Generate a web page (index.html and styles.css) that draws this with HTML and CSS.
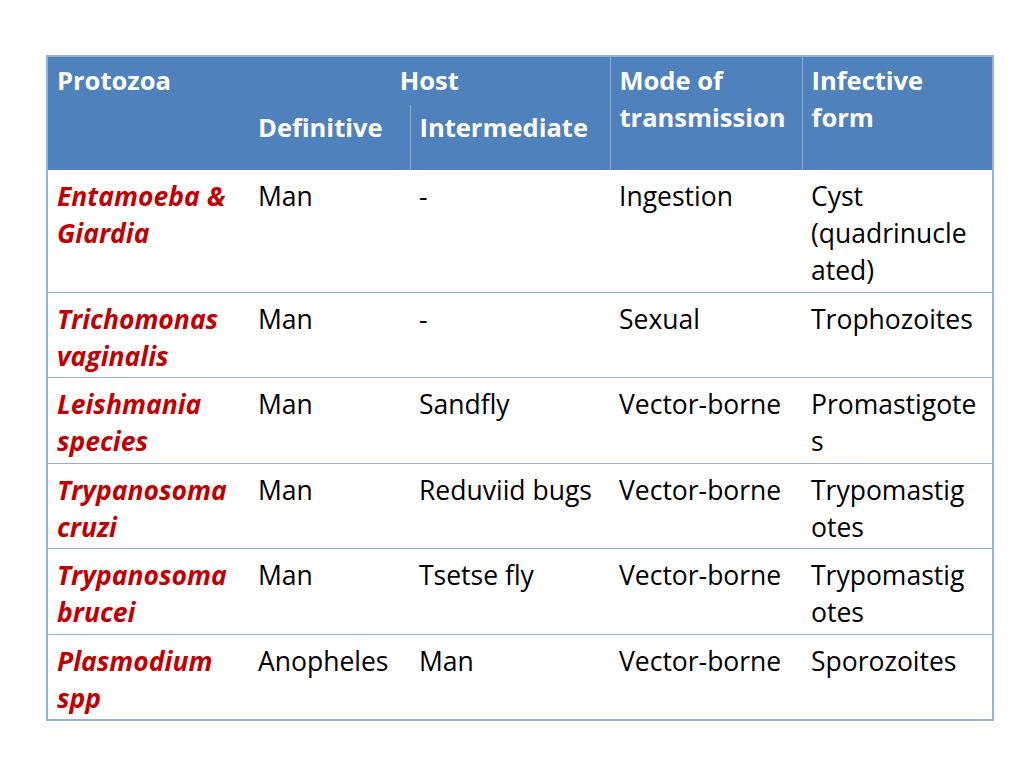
FILE: index.html
```html
<!DOCTYPE html>
<html lang="en">
<head>
<meta charset="utf-8">
<title>Protozoa</title>
<link rel="stylesheet" href="styles.css">
</head>
<body>
<div class="page">
  <table class="grid">
    <colgroup>
      <col class="c1"><col class="c2"><col class="c3"><col class="c4"><col class="c5">
    </colgroup>
    <thead>
      <tr class="h1">
        <th rowspan="2">Protozoa</th>
        <th colspan="2" class="host">Host</th>
        <th rowspan="2" class="sep">Mode of<br>transmission</th>
        <th rowspan="2" class="sep">Infective<br>form</th>
      </tr>
      <tr class="h2">
        <th>Definitive</th>
        <th class="sep">Intermediate</th>
      </tr>
    </thead>
    <tbody>
      <tr class="r3">
        <td class="org">Entamoeba &amp;<br>Giardia</td>
        <td>Man</td>
        <td>-</td>
        <td>Ingestion</td>
        <td>Cyst<br>(quadrinucle<br>ated)</td>
      </tr>
      <tr>
        <td class="org">Trichomonas<br>vaginalis</td>
        <td>Man</td>
        <td>-</td>
        <td>Sexual</td>
        <td>Trophozoites</td>
      </tr>
      <tr>
        <td class="org">Leishmania<br>species</td>
        <td>Man</td>
        <td>Sandfly</td>
        <td>Vector-borne</td>
        <td>Promastigote<br>s</td>
      </tr>
      <tr>
        <td class="org">Trypanosoma<br>cruzi</td>
        <td>Man</td>
        <td>Reduviid bugs</td>
        <td>Vector-borne</td>
        <td>Trypomastig<br>otes</td>
      </tr>
      <tr>
        <td class="org">Trypanosoma<br>brucei</td>
        <td>Man</td>
        <td>Tsetse fly</td>
        <td>Vector-borne</td>
        <td>Trypomastig<br>otes</td>
      </tr>
      <tr>
        <td class="org">Plasmodium<br>spp</td>
        <td>Anopheles</td>
        <td>Man</td>
        <td>Vector-borne</td>
        <td>Sporozoites</td>
      </tr>
    </tbody>
  </table>
</div>
</body>
</html>
```

FILE: styles.css
```css
html, body {
  margin: 0;
  padding: 0;
  background: #ffffff;
}

body {
  font-family: "Open Sans", "DejaVu Sans", sans-serif;
}

.page {
  padding: 55px 0 0 46px;
}

.grid {
  border-collapse: collapse;
  table-layout: fixed;
  width: 946px;
  border: 2px solid #95b3d7;
}

.c1 { width: 202px; }
.c2 { width: 161px; }
.c3 { width: 200px; }
.c4 { width: 192px; }
.c5 { width: 191px; }

th {
  background: #4f81bd;
  color: #ffffff;
  font-weight: 700;
  font-size: 25.5px;
  line-height: 37px;
  text-align: left;
  vertical-align: top;
  padding: 5px 9px 0 9px;
  white-space: nowrap;
}

.h1 th { height: 43px; }
.h2 th { height: 61px; padding-top: 4px; }

th.host {
  text-align: center;
  padding-left: 0;
  padding-right: 0;
}

th.sep {
  border-left: 1px solid #86a8d2;
}

td {
  font-size: 26.5px;
  line-height: 37px;
  color: #000000;
  vertical-align: top;
  padding: 8px 9px 2.5px 9px;
  border-top: 1px solid #95b3d7;
  white-space: nowrap;
}

tbody tr:first-child td {
  border-top: none;
}

td.org {
  color: #c00000;
  font-weight: 700;
  font-style: italic;
}
```
